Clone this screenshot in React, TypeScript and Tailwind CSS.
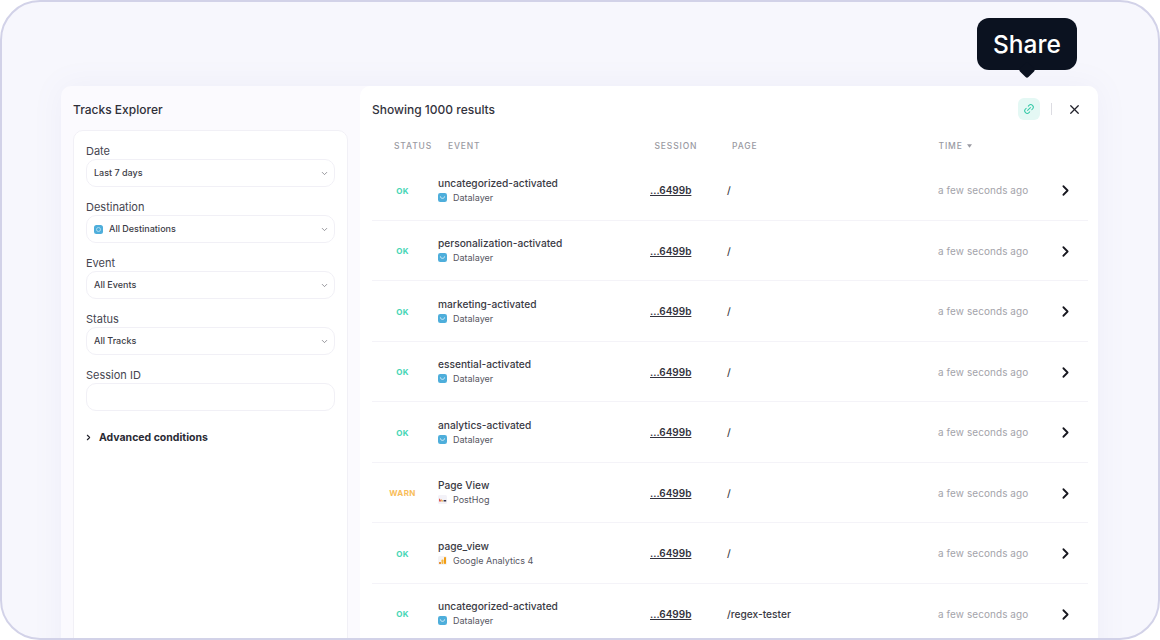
import { ChevronDown, ChevronRight, Link2, X } from "lucide-react";

type Track = {
  status: "OK" | "WARN";
  event: string;
  source: "datalayer" | "posthog" | "ga4";
  page: string;
};

const tracks: Track[] = [
  { status: "OK", event: "uncategorized-activated", source: "datalayer", page: "/" },
  { status: "OK", event: "personalization-activated", source: "datalayer", page: "/" },
  { status: "OK", event: "marketing-activated", source: "datalayer", page: "/" },
  { status: "OK", event: "essential-activated", source: "datalayer", page: "/" },
  { status: "OK", event: "analytics-activated", source: "datalayer", page: "/" },
  { status: "WARN", event: "Page View", source: "posthog", page: "/" },
  { status: "OK", event: "page_view", source: "ga4", page: "/" },
  { status: "OK", event: "uncategorized-activated", source: "datalayer", page: "/regex-tester" },
];

function DatalayerIcon() {
  return (
    <svg viewBox="0 0 9 9" className="h-[9px] w-[9px] shrink-0">
      <rect width="9" height="9" rx="2.2" fill="#4eaedb" />
      <path d="M2.4 3.4c0 2.6 4.2 2.6 4.2 0" fill="none" stroke="#d8eef8" strokeWidth="1" />
    </svg>
  );
}

function PosthogIcon() {
  return (
    <svg viewBox="0 0 9 9" className="h-[9px] w-[9px] shrink-0">
      <rect width="9" height="9" rx="1.5" fill="#f3f2f8" />
      <path d="M1 3.2l2 2v1.3H1z" fill="#e0574f" />
      <path d="M3.2 4l2 2v.5h-2z" fill="#e8a33d" />
      <path d="M5.6 5h2.6v1.5H5.6z" fill="#33324a" />
    </svg>
  );
}

function GaIcon() {
  return (
    <svg viewBox="0 0 9 9" className="h-[9px] w-[9px] shrink-0">
      <rect width="9" height="9" rx="1.5" fill="#f5f3f4" />
      <rect x="6" y="1" width="2" height="7" rx="0.8" fill="#f29d13" />
      <rect x="3.5" y="3.5" width="2" height="4.5" rx="0.8" fill="#f6b73c" />
      <circle cx="2" cy="7" r="1" fill="#e37400" />
    </svg>
  );
}

const sourceInfo = {
  datalayer: { label: "Datalayer", icon: <DatalayerIcon /> },
  posthog: { label: "PostHog", icon: <PosthogIcon /> },
  ga4: { label: "Google Analytics 4", icon: <GaIcon /> },
};

function Field({ label, value, icon }: { label: string; value?: string; icon?: boolean }) {
  return (
    <div className="h-14">
      <div className="h-[15px] text-[11px] leading-[15px] text-[#45454f]">{label}</div>
      <div className="flex h-7 w-[249px] items-center rounded-[10px] border border-[#f1f0f6] bg-white pl-[7px] pr-[5px]">
        {icon && (
          <svg viewBox="0 0 9 9" className="mr-[6px] h-[9px] w-[9px] shrink-0">
            <rect width="9" height="9" rx="2.5" fill="#4eaedb" />
            <circle cx="4.5" cy="4.5" r="2" fill="none" stroke="#bfe3f3" strokeWidth="0.8" />
          </svg>
        )}
        {value && <span className="flex-1 text-[9px] font-medium text-[#3c3c46]">{value}</span>}
        {value && <ChevronDown className="h-[9px] w-[9px] text-[#77777f]" strokeWidth={2} />}
      </div>
    </div>
  );
}

function TrackRow({ track }: { track: Track }) {
  const source = sourceInfo[track.source];
  return (
    <div className="flex h-[60.5px] shrink-0 items-center border-b border-[#f4f3f8] pt-[2px]">
      <div
        className={
          track.status === "OK"
            ? "w-[61px] text-center text-[8px] font-bold tracking-[0.04em] text-[#45d6b5]"
            : "w-[61px] text-center text-[8px] font-bold tracking-[0.04em] text-[#f8bd5a]"
        }
      >
        {track.status}
      </div>
      <div className="ml-[5px] w-[212px] pb-[2px]">
        <div className="text-[10.2px] leading-[14px] font-medium text-[#3a3a44]">{track.event}</div>
        <div className="mt-[1px] flex items-center gap-[6px]">
          {source.icon}
          <span className="text-[9px] leading-[13px] text-[#56565f]">{source.label}</span>
        </div>
      </div>
      <div className="w-[77px] text-[10px] font-semibold text-[#33333d] underline">...6499b</div>
      <div className="w-[211px] text-[10.2px] font-medium text-[#3a3a44]">{track.page}</div>
      <div className="w-[119px] text-[9.95px] tracking-[0.01em] text-[#a3a3aa]">a few seconds ago</div>
      <ChevronRight className="h-[17px] w-[17px] text-[#17171f]" strokeWidth={2.5} />
    </div>
  );
}

export default function App() {
  return (
    <div className="h-[640px] w-[1160px] overflow-hidden bg-white font-['Inter',sans-serif]">
      <div className="relative h-full overflow-hidden rounded-[40px] border-2 border-[#d2d2e8] bg-[#f7f7fd] pt-[84px] pr-[60px] pl-[59px]">
        {/* Share tooltip */}
        <div className="absolute top-4 left-[975px] flex h-[52px] w-[100px] items-center justify-center rounded-[12px] bg-[#0b1220] text-[24.5px] font-medium text-white">
          Share
          <div className="absolute -bottom-[6px] left-[44px] h-3 w-3 rotate-45 rounded-[2px] bg-[#0b1220]" />
        </div>

        <div className="flex h-[600px] rounded-t-[10px] bg-[#fbfafe] shadow-[0_0_30px_rgba(130,130,190,0.08)]">
          {/* Filters */}
          <aside className="w-[299px] shrink-0 px-3">
            <h2 className="pt-[15px] pb-[11px] text-[12px] leading-[18px] font-medium text-[#2f2f39]">
              Tracks Explorer
            </h2>
            <div className="h-[520px] w-[275px] rounded-t-[10px] border border-[#f1f0f6] bg-white pt-[13px] pl-3">
              <Field label="Date" value="Last 7 days" />
              <Field label="Destination" value="All Destinations" icon />
              <Field label="Event" value="All Events" />
              <Field label="Status" value="All Tracks" />
              <Field label="Session ID" />
              <div className="mt-[6px] flex items-center">
                <ChevronRight className="-ml-[2px] h-[9px] w-[9px] text-[#20202a]" strokeWidth={3} />
                <span className="ml-[6px] text-[10.5px] font-bold text-[#2a2a34]">Advanced conditions</span>
              </div>
            </div>
          </aside>

          {/* Results */}
          <main className="flex min-w-0 flex-1 flex-col rounded-tr-[10px] rounded-tl-[10px] bg-white pr-[10px] pl-3">
            <div className="flex h-[46px] shrink-0 items-center">
              <h2 className="flex-1 pt-[1px] text-[12px] font-medium text-[#33333d]">Showing 1000 results</h2>
              <div className="flex h-[22px] w-[22px] items-center justify-center rounded-[6px] bg-[#e4f8f4]">
                <Link2 className="h-3 w-3 -rotate-45 text-[#35c9a7]" />
              </div>
              <div className="mr-[15px] ml-[11px] h-3 w-px bg-[#dcdce2]" />
              <X className="mr-[6px] h-[15px] w-[15px] text-[#20202a]" strokeWidth={2} />
            </div>
            <div className="flex h-[28px] shrink-0 items-center text-[8.5px] font-medium tracking-[0.1em] text-[#9a9aa2]">
              <span className="ml-[22px] w-[54px]">STATUS</span>
              <span className="w-[206.5px]">EVENT</span>
              <span className="w-[77.5px]">SESSION</span>
              <span className="w-[206.5px]">PAGE</span>
              <span className="flex items-center gap-1">
                TIME
                <svg viewBox="0 0 6 4" className="h-1 w-[5px]">
                  <path d="M0 0h6L3 4z" fill="#9a9aa2" />
                </svg>
              </span>
            </div>
            <div className="flex-1 overflow-hidden rounded-t-[8px]">
              {tracks.map((track, i) => (
                <TrackRow key={i} track={track} />
              ))}
            </div>
          </main>
        </div>
      </div>
    </div>
  );
}
